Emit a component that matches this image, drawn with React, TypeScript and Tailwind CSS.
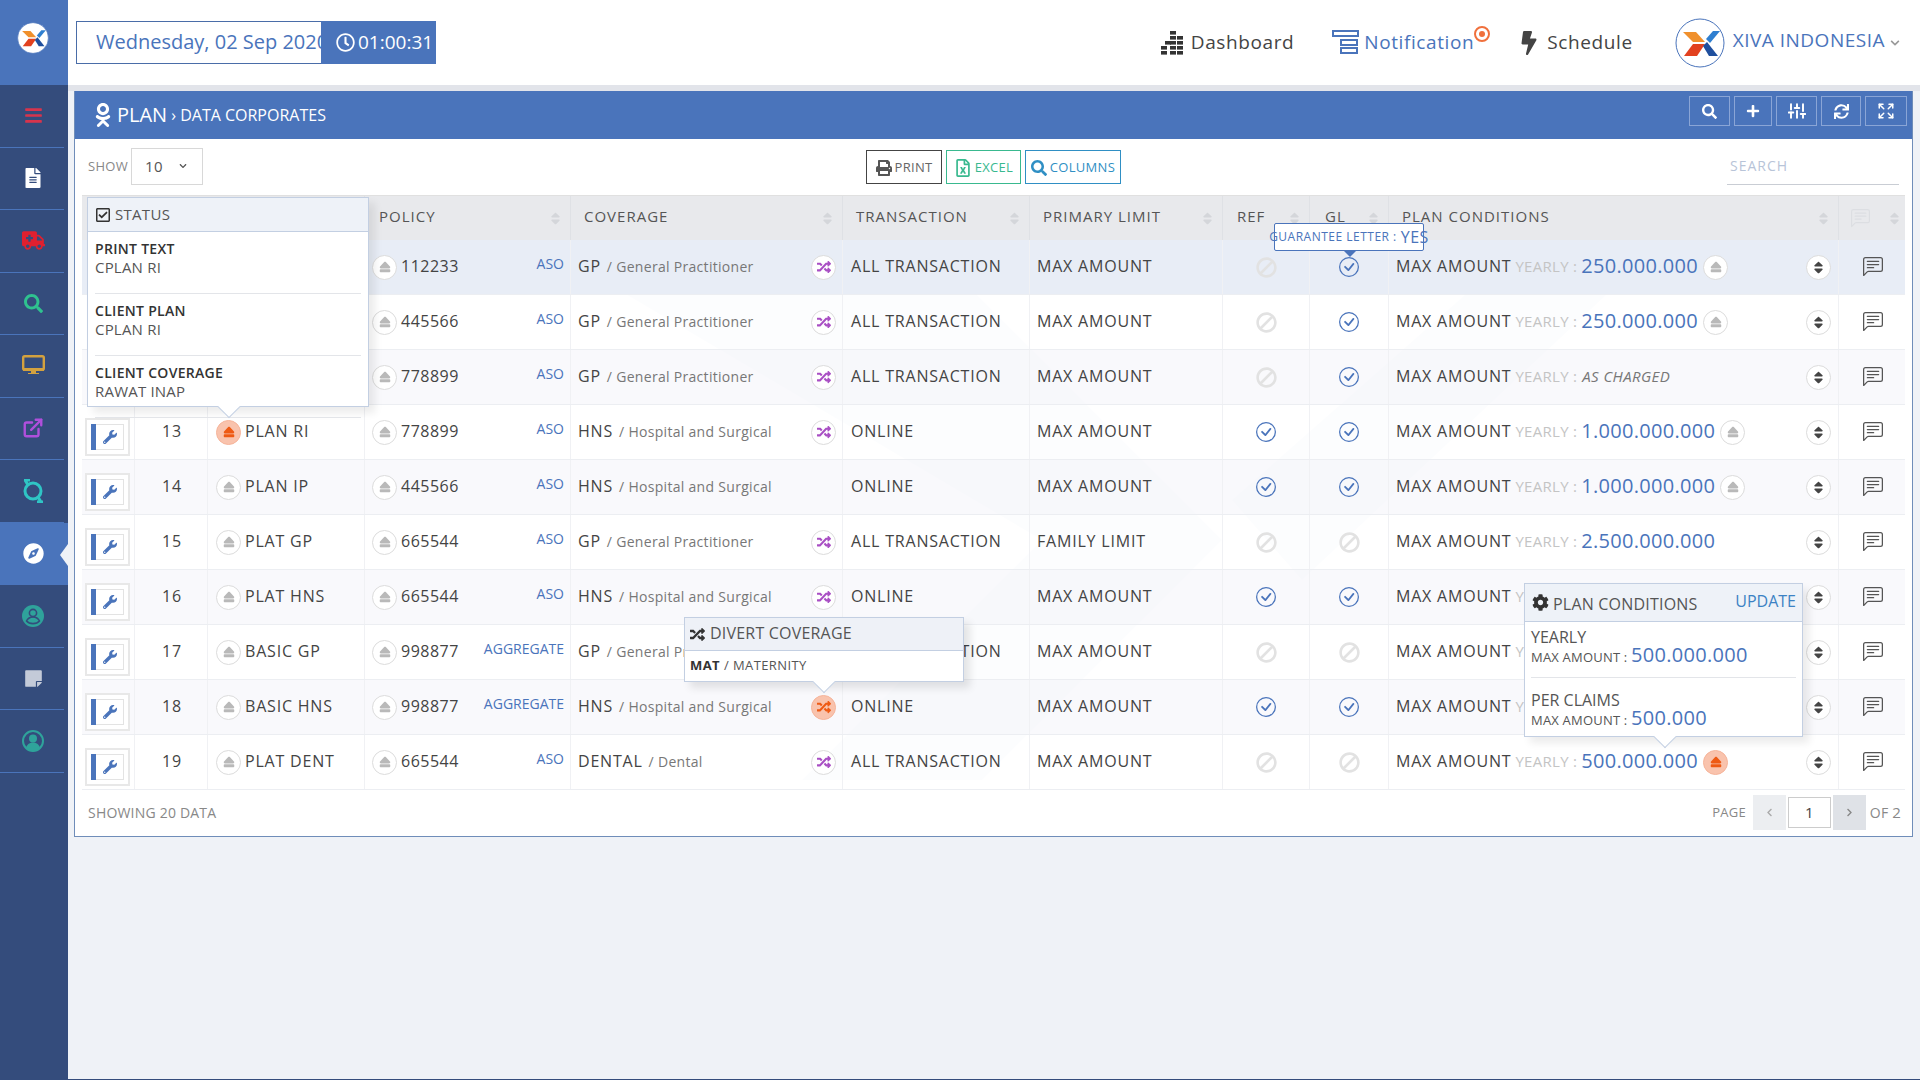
import {
  FaAmbulance, FaBan, FaBars, FaBolt, FaCalendarAlt, FaChevronDown, FaCog, FaCompass, FaEject,
  FaFileAlt, FaOdnoklassniki, FaPlus, FaPrint, FaRandom, FaRegCheckSquare, FaRegClock, FaRegFileExcel,
  FaSearch, FaSort, FaStickyNote, FaSync, FaWrench, FaChevronLeft, FaChevronRight,
} from "react-icons/fa";
import { FiExternalLink, FiSliders } from "react-icons/fi";
import { BsChatLeftText, BsCheckCircle } from "react-icons/bs";
import { Expand } from "lucide-react";

const COLS = "grid grid-cols-[53px_73px_157px_206px_272px_187px_193px_87px_79px_450px_68px]";
const FONT = "font-['Open_Sans',sans-serif] [font-stretch:93%]";

type Row = {
  no: number;
  plan: string;
  policy: string;
  kind: string;
  code: string;
  cover: string;
  shuffle?: boolean;
  tx: string;
  limit: string;
  ref: boolean;
  gl: boolean;
  amount: string;
  lift?: boolean;
};

const rows: Row[] = [
  { no: 10, plan: "", policy: "112233", kind: "ASO", code: "GP", cover: "General Practitioner", shuffle: true, tx: "ALL TRANSACTION", limit: "MAX AMOUNT", ref: false, gl: true, amount: "250.000.000", lift: true },
  { no: 11, plan: "", policy: "445566", kind: "ASO", code: "GP", cover: "General Practitioner", shuffle: true, tx: "ALL TRANSACTION", limit: "MAX AMOUNT", ref: false, gl: true, amount: "250.000.000", lift: true },
  { no: 12, plan: "", policy: "778899", kind: "ASO", code: "GP", cover: "General Practitioner", shuffle: true, tx: "ALL TRANSACTION", limit: "MAX AMOUNT", ref: false, gl: true, amount: "" },
  { no: 13, plan: "PLAN RI", policy: "778899", kind: "ASO", code: "HNS", cover: "Hospital and Surgical", shuffle: true, tx: "ONLINE", limit: "MAX AMOUNT", ref: true, gl: true, amount: "1.000.000.000", lift: true },
  { no: 14, plan: "PLAN IP", policy: "445566", kind: "ASO", code: "HNS", cover: "Hospital and Surgical", tx: "ONLINE", limit: "MAX AMOUNT", ref: true, gl: true, amount: "1.000.000.000", lift: true },
  { no: 15, plan: "PLAT GP", policy: "665544", kind: "ASO", code: "GP", cover: "General Practitioner", shuffle: true, tx: "ALL TRANSACTION", limit: "FAMILY LIMIT", ref: false, gl: false, amount: "2.500.000.000" },
  { no: 16, plan: "PLAT HNS", policy: "665544", kind: "ASO", code: "HNS", cover: "Hospital and Surgical", shuffle: true, tx: "ONLINE", limit: "MAX AMOUNT", ref: true, gl: true, amount: "" },
  { no: 17, plan: "BASIC GP", policy: "998877", kind: "AGGREGATE", code: "GP", cover: "General Practitioner", shuffle: true, tx: "ALL TRANSACTION", limit: "MAX AMOUNT", ref: false, gl: false, amount: "" },
  { no: 18, plan: "BASIC HNS", policy: "998877", kind: "AGGREGATE", code: "HNS", cover: "Hospital and Surgical", shuffle: true, tx: "ONLINE", limit: "MAX AMOUNT", ref: true, gl: true, amount: "" },
  { no: 19, plan: "PLAT DENT", policy: "665544", kind: "ASO", code: "DENTAL", cover: "Dental", shuffle: true, tx: "ALL TRANSACTION", limit: "MAX AMOUNT", ref: false, gl: false, amount: "500.000.000", lift: true },
];

function XLogo({ size }: { size: number }) {
  return (
    <svg width={size} height={size} viewBox="0 0 50 50">
      <circle cx="25" cy="25" r="24" fill="#fff" stroke="#4a74bb" strokeWidth="1" />
      <path d="M8 14h13l9 10H18z" fill="#f0902c" />
      <path d="M18 26h12l-8 12H9z" fill="#e2411f" />
      <path d="M31 21l7-8h7l-10 12z" fill="#2f7fd0" />
      <path d="M28 28l4-4 11 14H34z" fill="#1f4f9e" />
    </svg>
  );
}

function DashIcon() {
  return (
    <svg width="24" height="24" viewBox="0 0 24 24" fill="#333">
      {[[9, 0], [9, 5], [16, 5], [4, 10], [9, 10], [16, 10], [0, 15], [9, 15], [16, 15], [0, 20], [9, 20], [16, 20]].map(([x, y]) => (
        <rect key={`${x}-${y}`} x={x} y={y} width="6" height="3.6" />
      ))}
    </svg>
  );
}

function NotifyIcon() {
  return (
    <svg width="27" height="25" viewBox="0 0 27 25" fill="none" stroke="#4a74bb" strokeWidth="2">
      <rect x="1" y="1" width="25" height="5" />
      <rect x="9" y="10" width="16" height="5" />
      <rect x="9" y="18" width="16" height="5" />
    </svg>
  );
}

function QIcon() {
  return (
    <svg width="22" height="24" viewBox="0 0 22 24" fill="none" stroke="#2fc5c5" strokeWidth="3">
      <circle cx="11" cy="12" r="8" />
      <path d="M2 1h6M3 1l3 5M21 23h-6M19 23l-3-5" />
    </svg>
  );
}

function MonitorIcon() {
  return (
    <svg width="23" height="21" viewBox="0 0 23 21" fill="#d3a13f">
      <rect x="1.2" y="1.2" width="20.6" height="13.6" rx="1.5" fill="none" stroke="#d3a13f" strokeWidth="2.4" />
      <path d="M1 13h21v3H14v2h3v1H6v-1h3v-2H1z" />
    </svg>
  );
}

function UserA() {
  return (
    <svg width="22" height="22" viewBox="0 0 22 22" fill="none">
      <circle cx="11" cy="11" r="11" fill="#2fa39b" />
      <circle cx="11" cy="8" r="3.6" stroke="#344c7c" strokeWidth="1.6" />
      <path d="M4.5 16c1.5-3 3.5-4 6.500-4s5 1 6.500 4c-3 3.500-10 3.500-13 0z" stroke="#344c7c" strokeWidth="1.6" />
    </svg>
  );
}

function UserB() {
  return (
    <svg width="22" height="22" viewBox="0 0 22 22" fill="none">
      <circle cx="11" cy="11" r="10" stroke="#2fa39b" strokeWidth="2" />
      <circle cx="11" cy="8.500" r="4" fill="#2fa39b" />
      <path d="M4 18c1-4 4-5.500 7-5.500s6 1.500 7 5.500c-3 3.500-11 3.500-14 0z" fill="#2fa39b" />
    </svg>
  );
}

function Side({ children, active }: { children: React.ReactNode; active?: boolean }) {
  return (
    <div className={active ? "relative h-[62.5px] w-full bg-[#4a74bb] flex items-center justify-center pr-[2px]" : "h-[62.5px] w-[64px] border-b border-[#4a74bb] flex items-center justify-center pl-[2px]"}>
      {children}
      {active && <span className="absolute right-0 top-[21px] border-y-[11px] border-r-[8px] border-y-transparent border-r-[#eff2f7]" />}
    </div>
  );
}

function Round({ on, children }: { on?: boolean; children: React.ReactNode }) {
  return (
    <span className={on ? "shrink-0 w-[25px] h-[25px] rounded-full bg-[#f9c3ad] border border-[#f6b49a] flex items-center justify-center text-[#ee5a14]" : "shrink-0 w-[25px] h-[25px] rounded-full bg-white border border-[#dcdcdc] flex items-center justify-center"}>
      {children}
    </span>
  );
}

function Eject({ on }: { on?: boolean }) {
  return (
    <Round on={on}>
      <FaEject size={12} className={on ? "text-[#ee5a14]" : "text-[#b9b9b9]"} />
    </Round>
  );
}

function Head({ label, className }: { label: string; className?: string }) {
  return (
    <div className={`flex items-center justify-between pr-[7px] border-r border-[#dfe1e5] ${className ?? ""}`}>
      <span className="-mt-[3px]">{label}</span>
      <FaSort size={15} className="text-[#d4d6da]" />
    </div>
  );
}

function TableRow({ row, i }: { row: Row; i: number }) {
  const bg = i === 0 ? "bg-[#e8edf6]" : i % 2 === 1 ? "bg-white/70" : "bg-[#f7f8fb]/80";
  const hidden = row.no < 13;
  return (
    <div className={`${COLS} h-[55px] border-b border-[#eceef2] text-[16px] tracking-[0.8px] text-[#444] ${bg}`}>
      <div className="flex items-center pl-[3px] border-r border-[#f0f1f4]">
        {!hidden && (
          <div className="w-[45px] h-[38px] border-2 border-[#e8e8e8] bg-white p-[4px] mt-[9px] flex">
            <div className="w-[5px] bg-[#4a74bb]" />
            <div className="flex-1 border border-[#e3e3e3] border-l-0 flex items-center justify-center">
              <FaWrench size={14} className="text-[#4a74bb]" />
            </div>
          </div>
        )}
      </div>
      <div className="flex items-center justify-center pl-[2px] pb-[2px] border-r border-[#f0f1f4]">{!hidden && row.no}</div>
      <div className="flex items-center gap-[4px] pl-[8px] border-r border-[#f0f1f4]">
        {!hidden && <Eject on={row.no === 13} />}
        <span className="-mt-[2px]">{row.plan}</span>
      </div>
      <div className="relative flex items-center gap-[4px] pl-[7px] border-r border-[#f0f1f4]">
        <Eject />
        <span className="-mt-[2px] tracking-[0.5px]">{row.policy}</span>
        <span className="absolute right-[6px] top-[13px] text-[14px] tracking-normal text-[#4a74bb]">{row.kind}</span>
      </div>
      <div className="flex items-center justify-between pl-[7px] pr-[6px] border-r border-[#f0f1f4]">
        <span className="-mt-[2px]">
          {row.code} <span className="ml-[1px] text-[14px] tracking-[0.3px] text-[#777]">/ {row.cover}</span>
        </span>
        {row.shuffle && (
          <Round on={row.no === 18}>
            <FaRandom size={14} className={row.no === 18 ? "text-[#ee5a14]" : "text-[#a94fc4]"} />
          </Round>
        )}
      </div>
      <div className="flex items-center pl-[8px] pb-[2px] border-r border-[#f0f1f4]">{row.tx}</div>
      <div className="flex items-center pl-[7px] pb-[2px] border-r border-[#f0f1f4]">{row.limit}</div>
      <div className="flex items-center justify-center border-r border-[#f0f1f4]">
        {row.ref ? <BsCheckCircle size={20} className="text-[#4a74bb]" /> : <FaBan size={21} className="-scale-x-100 text-[#e2e2e2]" />}
      </div>
      <div className="flex items-center justify-center border-r border-[#f0f1f4]">
        {row.gl ? <BsCheckCircle size={20} className="text-[#4a74bb]" /> : <FaBan size={21} className="-scale-x-100 text-[#e2e2e2]" />}
      </div>
      <div className="flex items-center pl-[7px] pr-[7px] border-r border-[#f0f1f4]">
        <span className="-mt-[2px]">MAX AMOUNT</span>
        <span className="-mt-[2px] ml-[4px] text-[15px] tracking-[0.3px] text-[#c4c4c4]">YEARLY :</span>
        {row.no === 12 ? (
          <span className="-mt-[2px] ml-[5px] text-[15px] italic text-[#777] tracking-[0.4px]">AS CHARGED</span>
        ) : (
          <span className="-mt-[3px] ml-[4px] text-[20px] tracking-[0.3px] text-[#4a74bb]">{row.amount}</span>
        )}
        {row.lift && (
          <span className="ml-[5px]">
            <Eject on={row.no === 19} />
          </span>
        )}
        <span className="ml-auto">
          <Round>
            <FaSort size={15} className="text-[#444]" />
          </Round>
        </span>
      </div>
      <div className="flex items-center justify-center">
        <BsChatLeftText size={20} className="text-[#555]" />
      </div>
    </div>
  );
}

function Arrow({ className }: { className: string }) {
  return <span className={`absolute w-[16px] h-[16px] rotate-45 bg-white border-r border-b border-[#c3cfe2] ${className}`} />;
}

export default function App() {
  return (
    <div className={`flex h-screen w-full overflow-hidden bg-[#eff2f7] border-b border-[#344c7c] ${FONT}`}>
      <aside className="w-[68px] shrink-0 bg-[#344c7c] flex flex-col">
        <div className="h-[85px] bg-[#4a74bb] flex items-center pl-[17px] pb-[10px]">
          <XLogo size={32} />
        </div>
        <Side><FaBars size={19} className="text-[#d8344c]" /></Side>
        <Side><FaFileAlt size={20} className="text-white" /></Side>
        <Side><FaAmbulance size={23} className="text-[#e0202f]" /></Side>
        <Side><FaSearch size={19} className="text-[#2fc28f]" /></Side>
        <Side><MonitorIcon /></Side>
        <Side><FiExternalLink size={22} strokeWidth={2.6} className="text-[#b04fdc]" /></Side>
        <Side><QIcon /></Side>
        <Side active><FaCompass size={21} className="text-white" /></Side>
        <Side><UserA /></Side>
        <Side><FaStickyNote size={19} className="text-[#c3cad8]" /></Side>
        <Side><UserB /></Side>
      </aside>

      <main className="flex-1 min-w-0 flex flex-col">
        <header className="h-[85px] shrink-0 bg-white flex items-center pl-[8px] pr-[20px]">
          <div className="h-[43px] w-[245px] mb-[1px] border border-[#4a6da8] border-r-0 flex items-center gap-[4px] pl-[15px] text-[20px] whitespace-nowrap text-[#4a74bb]">
            <FaCalendarAlt size={17} />
            <span>Wednesday, 02 Sep 2020</span>
          </div>
          <div className="h-[43px] w-[115px] mb-[1px] bg-[#4a74bb] flex items-center gap-[3px] pl-[15px] text-white text-[19px] font-medium">
            <FaRegClock size={19} />
            <span>01:00:31</span>
          </div>
          <div className="ml-auto flex items-center">
            <DashIcon />
            <span className="ml-[6px] text-[19px] tracking-[0.6px] text-[#444]">Dashboard</span>
            <span className="ml-[38px]"><NotifyIcon /></span>
            <span className="ml-[5px] text-[19px] tracking-[0.6px] text-[#4a74bb]">Notification</span>
            <span className="w-[16px] h-[16px] -mt-[18px] rounded-full border-2 border-[#f0703c] flex items-center justify-center">
              <span className="w-[6px] h-[6px] rounded-full bg-[#f0703c]" />
            </span>
            <FaBolt size={24} className="ml-[27px] text-[#444]" />
            <span className="ml-[6px] text-[19px] tracking-[0.6px] text-[#444]">Schedule</span>
            <span className="ml-[42px]"><XLogo size={50} /></span>
            <span className="ml-[8px] -mt-[4px] text-[19px] tracking-[0.5px] text-[#4a74bb]">XIVA INDONESIA</span>
            <FaChevronDown size={10} className="ml-[5px] text-[#999]" />
          </div>
        </header>

        <div className="h-[6px] shrink-0 bg-[#e2e4ea]" />

        <section className="ml-[6px] mr-[7px] h-[746px] shrink-0 bg-white border border-[#6f8db9] border-t-0 flex flex-col">
          <div className="h-[48px] shrink-0 bg-[#4a74bb] flex items-center pl-[16px] pr-[5px] text-white">
            <FaOdnoklassniki size={24} />
            <span className="ml-[2px] text-[20px]">PLAN</span>
            <span className="ml-[4px] text-[16px]">› DATA CORPORATES</span>
            <div className="ml-auto flex gap-[4px] mb-[8px]">
              <span className="w-[41px] h-[30px] border border-[#8aa5d6] flex items-center justify-center"><FaSearch size={15} /></span>
              <span className="w-[38px] h-[30px] border border-[#8aa5d6] flex items-center justify-center"><FaPlus size={14} /></span>
              <span className="w-[41px] h-[30px] border border-[#8aa5d6] flex items-center justify-center"><FiSliders size={18} strokeWidth={2.6} /></span>
              <span className="w-[40px] h-[30px] border border-[#8aa5d6] flex items-center justify-center"><FaSync size={15} /></span>
              <span className="w-[42px] h-[30px] border border-[#8aa5d6] flex items-center justify-center"><Expand size={18} strokeWidth={2} /></span>
            </div>
          </div>

          <div className="h-[56px] shrink-0 grid grid-cols-3 items-center px-[13px]">
            <div className="flex items-center gap-[3px] text-[13px] tracking-[0.3px] text-[#888]">
              <span>SHOW</span>
              <div className="w-[72px] h-[37px] -mt-[2px] border border-[#d8d8d8] flex items-center justify-between pl-[13px] pr-[15px] text-[15px] text-[#555]">
                <span>10</span>
                <FaChevronDown size={8} />
              </div>
            </div>
            <div className="flex justify-center gap-[4px] text-[13px] tracking-[0.3px]">
              <span className="w-[76px] h-[34px] border border-[#444] flex items-center justify-center gap-[3px] pt-[1px] text-[#666]"><FaPrint size={16} className="text-[#555]" />PRINT</span>
              <span className="w-[75px] h-[34px] border border-[#39b98f] flex items-center justify-center gap-[3px] pt-[1px] text-[#39b98f]"><FaRegFileExcel size={18} />EXCEL</span>
              <span className="w-[96px] h-[34px] border border-[#2f8fc4] flex items-center justify-center gap-[3px] pt-[1px] text-[#2f8fc4]"><FaSearch size={16} />COLUMNS</span>
            </div>
            <div className="justify-self-end w-[172px] h-[34px] mt-[2px] border-b border-[#c9cdd4] text-[14px] tracking-[1px] text-[#b8c4d8] pl-[3px] pt-[4px]">SEARCH</div>
          </div>

          <div className="relative ml-[7px] w-[1823px]">
            <div className={`${COLS} h-[45px] bg-[#e8e9ec] border-t border-[#e0e0e0] text-[15px] tracking-[1px] text-[#555]`}>
              <div />
              <div />
              <div className="border-r border-[#dfe1e5]" />
              <Head label="POLICY" className="pl-[14px]" />
              <Head label="COVERAGE" className="pl-[13px]" />
              <Head label="TRANSACTION" className="pl-[13px]" />
              <Head label="PRIMARY LIMIT" className="pl-[13px]" />
              <Head label="REF" className="pl-[14px]" />
              <Head label="GL" className="pl-[15px]" />
              <Head label="PLAN CONDITIONS" className="pl-[13px]" />
              <div className="flex items-center justify-between pl-[12px] pr-[5px]">
                <BsChatLeftText size={19} className="text-[#dcdee2]" />
                <FaSort size={15} className="text-[#d4d6da]" />
              </div>
            </div>

            <div className="relative">
              <svg className="absolute inset-0 w-full h-full pointer-events-none" viewBox="0 0 1823 550" fill="none">
                <path d="M520 40L880 40L1140 300L900 540L720 540L960 300Z" fill="#eef1f7" opacity="0.5" />
                <path d="M1150 260L1400 40L1540 40L1220 340Z" fill="#eef1f7" opacity="0.5" />
              </svg>
              <div className="relative">
                {rows.map((row, i) => (
                  <TableRow key={row.no} row={row} i={i} />
                ))}
              </div>
            </div>

            {/* status popover */}
            <div className="absolute left-[5px] top-[2px] w-[282px] h-[210px] bg-white border border-[#c3cfe2] shadow-[6px_6px_8px_rgba(0,0,0,0.08)] text-[#555]">
              <div className="h-[34px] bg-[#eef2f8] border-b border-[#c3cfe2] flex items-center gap-[4px] pl-[7px] text-[15px] tracking-[0.3px]">
                <FaRegCheckSquare size={16} className="text-[#333]" />
                <span>STATUS</span>
              </div>
              {[["PRINT TEXT", "CPLAN RI"], ["CLIENT PLAN", "CPLAN RI"], ["CLIENT COVERAGE", "RAWAT INAP"]].map(([a, b]) => (
                <div key={a} className="h-[62px] mx-[7px] pt-[8px] leading-[18px] border-b border-[#e3e5e9] last:border-b-0">
                  <div className="text-[14px] font-semibold tracking-[0.3px] text-[#333]">{a}</div>
                  <div className="text-[15px] tracking-[0.2px]">{b}</div>
                </div>
              ))}
              <Arrow className="left-[133px] -bottom-[9px]" />
            </div>

            {/* divert popover */}
            <div className="absolute left-[602px] top-[422px] w-[280px] h-[65px] bg-white border border-[#c3cfe2] shadow-[6px_6px_8px_rgba(0,0,0,0.1)] text-[#555]">
              <div className="h-[33px] bg-[#eef1f7] border-b border-[#c3cfe2] flex items-center gap-[5px] pl-[5px] pb-[3px] text-[16px] tracking-[0.2px]">
                <FaRandom size={15} className="mt-[3px] text-[#333]" />
                <span>DIVERT COVERAGE</span>
              </div>
              <div className="h-[30px] flex items-center pl-[5px] text-[13px] tracking-[0.4px]">
                <b className="text-[#333]">MAT</b>
                <span className="ml-[4px]">/ MATERNITY</span>
              </div>
              <Arrow className="left-[131px] -bottom-[9px]" />
            </div>

            {/* guarantee letter tooltip */}
            <div className="absolute left-[1192px] top-[28px] w-[150px] h-[28px] bg-white border border-[#4a74bb] rounded-[2px] flex items-center justify-center gap-[4px] whitespace-nowrap text-[12px] tracking-[0.5px] text-[#4a74bb]">
              GUARANTEE LETTER : <span className="text-[16px]">YES</span>
              <span className="absolute left-[69px] -bottom-[7px] border-x-[6px] border-t-[6px] border-x-transparent border-t-[#4a74bb]" />
            </div>

            {/* plan conditions popover */}
            <div className="absolute left-[1442px] top-[388px] w-[279px] h-[154px] bg-white border border-[#c3cfe2] shadow-[6px_6px_8px_rgba(0,0,0,0.08)] text-[#555]">
              <div className="h-[38px] bg-[#eef2f8] border-b border-[#c3cfe2] flex items-center pl-[7px] pr-[6px] text-[16px]">
                <FaCog size={17} className="text-[#333]" />
                <span className="ml-[4px] mt-[2px] tracking-[0.2px]">PLAN CONDITIONS</span>
                <span className="ml-auto -mt-[3px] text-[#3c82c4]">UPDATE</span>
              </div>
              <div className="h-[56px] mx-[6px] pt-[6px] border-b border-[#e3e5e9] text-[16px] leading-[18px]">
                <div>YEARLY</div>
                <div className="text-[13px] tracking-[0.2px]">MAX AMOUNT : <span className="text-[20px] tracking-[0.3px] text-[#4a74bb]">500.000.000</span></div>
              </div>
              <div className="mx-[6px] pt-[13px] text-[16px] leading-[18px]">
                <div>PER CLAIMS</div>
                <div className="text-[13px] tracking-[0.2px]">MAX AMOUNT : <span className="text-[20px] tracking-[0.3px] text-[#4a74bb]">500.000</span></div>
              </div>
              <Arrow className="left-[132px] -bottom-[9px]" />
            </div>
          </div>

          <div className="h-[47px] flex items-center justify-between pl-[13px] pr-[11px] pb-[1px] text-[14px] tracking-[0.2px] text-[#888]">
            <span>SHOWING 20 DATA</span>
            <div className="flex items-center">
              <span className="mr-[7px] text-[13px]">PAGE</span>
              <span className="w-[33px] h-[35px] bg-[#eceef1] flex items-center justify-center"><FaChevronLeft size={9} className="text-[#aaa]" /></span>
              <span className="w-[43px] h-[31px] mx-[2px] border border-[#ccc] flex items-center justify-center text-[15px] text-[#444]">1</span>
              <span className="w-[33px] h-[35px] bg-[#dfe2e7] flex items-center justify-center"><FaChevronRight size={9} className="text-[#888]" /></span>
              <span className="ml-[4px] text-[14px]">OF <span className="text-[15px]">2</span></span>
            </div>
          </div>
        </section>
      </main>
    </div>
  );
}
